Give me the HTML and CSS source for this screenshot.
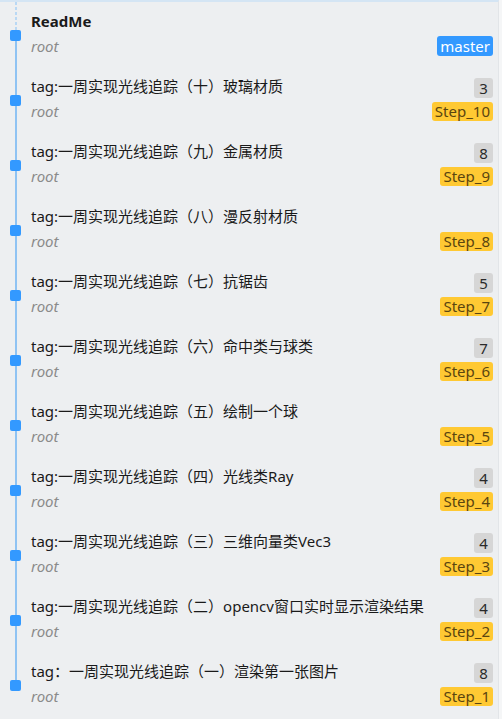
FILE: index.html
```html
<!DOCTYPE html>
<html lang="zh">
<head>
<meta charset="utf-8">
<link rel="stylesheet" href="styles.css">
</head>
<body>
<div class="panel">
  <ul class="timeline">
    <li class="item first">
      <div class="rail"><span class="seg top"></span><span class="dot"></span><span class="seg bottom"></span></div>
      <div class="body">
        <div class="line1"><span class="title bold">ReadMe</span></div>
        <div class="line2"><span class="author">root</span><span class="badge branch">master</span></div>
      </div>
    </li>
    <li class="item">
      <div class="rail"><span class="seg top"></span><span class="dot"></span><span class="seg bottom"></span></div>
      <div class="body">
        <div class="line1"><span class="title">tag:一周实现光线追踪（十）玻璃材质</span><span class="badge count">3</span></div>
        <div class="line2"><span class="author">root</span><span class="badge tag">Step_10</span></div>
      </div>
    </li>
    <li class="item">
      <div class="rail"><span class="seg top"></span><span class="dot"></span><span class="seg bottom"></span></div>
      <div class="body">
        <div class="line1"><span class="title">tag:一周实现光线追踪（九）金属材质</span><span class="badge count">8</span></div>
        <div class="line2"><span class="author">root</span><span class="badge tag">Step_9</span></div>
      </div>
    </li>
    <li class="item">
      <div class="rail"><span class="seg top"></span><span class="dot"></span><span class="seg bottom"></span></div>
      <div class="body">
        <div class="line1"><span class="title">tag:一周实现光线追踪（八）漫反射材质</span></div>
        <div class="line2"><span class="author">root</span><span class="badge tag">Step_8</span></div>
      </div>
    </li>
    <li class="item">
      <div class="rail"><span class="seg top"></span><span class="dot"></span><span class="seg bottom"></span></div>
      <div class="body">
        <div class="line1"><span class="title">tag:一周实现光线追踪（七）抗锯齿</span><span class="badge count">5</span></div>
        <div class="line2"><span class="author">root</span><span class="badge tag">Step_7</span></div>
      </div>
    </li>
    <li class="item">
      <div class="rail"><span class="seg top"></span><span class="dot"></span><span class="seg bottom"></span></div>
      <div class="body">
        <div class="line1"><span class="title">tag:一周实现光线追踪（六）命中类与球类</span><span class="badge count">7</span></div>
        <div class="line2"><span class="author">root</span><span class="badge tag">Step_6</span></div>
      </div>
    </li>
    <li class="item">
      <div class="rail"><span class="seg top"></span><span class="dot"></span><span class="seg bottom"></span></div>
      <div class="body">
        <div class="line1"><span class="title">tag:一周实现光线追踪（五）绘制一个球</span></div>
        <div class="line2"><span class="author">root</span><span class="badge tag">Step_5</span></div>
      </div>
    </li>
    <li class="item">
      <div class="rail"><span class="seg top"></span><span class="dot"></span><span class="seg bottom"></span></div>
      <div class="body">
        <div class="line1"><span class="title">tag:一周实现光线追踪（四）光线类Ray</span><span class="badge count">4</span></div>
        <div class="line2"><span class="author">root</span><span class="badge tag">Step_4</span></div>
      </div>
    </li>
    <li class="item">
      <div class="rail"><span class="seg top"></span><span class="dot"></span><span class="seg bottom"></span></div>
      <div class="body">
        <div class="line1"><span class="title">tag:一周实现光线追踪（三）三维向量类Vec3</span><span class="badge count">4</span></div>
        <div class="line2"><span class="author">root</span><span class="badge tag">Step_3</span></div>
      </div>
    </li>
    <li class="item">
      <div class="rail"><span class="seg top"></span><span class="dot"></span><span class="seg bottom"></span></div>
      <div class="body">
        <div class="line1"><span class="title">tag:一周实现光线追踪（二）opencv窗口实时显示渲染结果</span><span class="badge count">4</span></div>
        <div class="line2"><span class="author">root</span><span class="badge tag">Step_2</span></div>
      </div>
    </li>
    <li class="item last">
      <div class="rail"><span class="seg top"></span><span class="dot"></span><span class="seg bottom"></span></div>
      <div class="body">
        <div class="line1"><span class="title">tag：一周实现光线追踪（一）渲染第一张图片</span><span class="badge count">8</span></div>
        <div class="line2"><span class="author">root</span><span class="badge tag">Step_1</span></div>
      </div>
    </li>
  </ul>
</div>
</body>
</html>
```

FILE: styles.css
```css
html, body {
  margin: 0;
  padding: 0;
  background: #f5f6f7;
}
body {
  font-family: "Noto Sans", "Noto Sans CJK SC", sans-serif;
  font-size: 15px;
  color: #1a1a1a;
}
.panel {
  width: 499px;
  height: 719px;
  background: #edeff1;
  border-top: 2px solid #d4e5f4;
  border-right: 1px solid #e2e5e8;
  box-sizing: border-box;
  overflow: hidden;
}
.timeline {
  list-style: none;
  margin: 0;
  padding: 0;
}
.item {
  display: grid;
  grid-template-columns: 31px 1fr;
  height: 65px;
}
.first {
  height: 63px;
}
.rail {
  display: flex;
  flex-direction: column;
  align-items: center;
}
.seg {
  width: 2px;
  background: #8fc3f3;
}
.seg.top {
  height: 30px;
}
.first .seg.top {
  height: 28px;
  background: repeating-linear-gradient(to bottom, #b9d8f4 0 3px, transparent 3px 5px);
}
.seg.bottom {
  flex: 1;
}
.last .seg.bottom {
  background: transparent;
}
.dot {
  width: 11px;
  height: 11px;
  border-radius: 2px;
  background: #3399ff;
  flex: none;
}
.body {
  padding: 10px 5px 0 0;
  display: flex;
  flex-direction: column;
  gap: 3px;
}
.first .body {
  padding-top: 8px;
}
.line1, .line2 {
  height: 22px;
  display: flex;
  align-items: center;
  justify-content: space-between;
}
.title {
  white-space: nowrap;
  line-height: 22px;
}
.bold {
  font-weight: bold;
}
.author {
  font-style: italic;
  color: #8a8a8a;
  font-size: 15px;
}
.badge {
  height: 20px;
  line-height: 20px;
  padding: 0 3px;
  border-radius: 3px;
  font-size: 15px;
  box-sizing: border-box;
}
.line1 .badge {
  margin-top: 4px;
}
.branch {
  background: #3399ff;
  color: #ffffff;
  padding: 0 3px;
}
.count {
  background: #d6d6d6;
  color: #2a2a2a;
  min-width: 19px;
  text-align: center;
}
.tag {
  background: #ffc933;
  color: #5a4510;
  height: 19px;
  line-height: 19px;
}
```
